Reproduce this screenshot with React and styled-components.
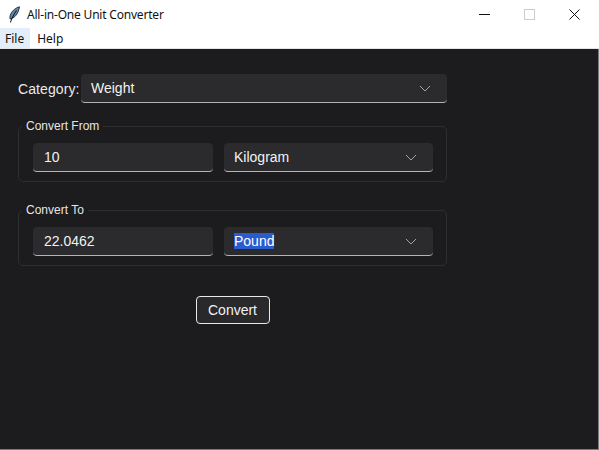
import React from 'react';
import styled, { createGlobalStyle } from 'styled-components';

const Global = createGlobalStyle`
  html, body { margin: 0; padding: 0; background: #1c1b1d; }
  body { font-family: "Liberation Sans", Arial, sans-serif; overflow: hidden; }
`;

const Window = styled.div`
  width: 599px;
  height: 450px;
  display: flex;
  flex-direction: column;
  overflow: hidden;
  background: #1c1b1d;
`;

const TitleBar = styled.div`
  height: 28px;
  flex: none;
  display: flex;
  align-items: center;
  background: #fff;
  padding: 0 2px 0 7px;
`;

const TitleText = styled.span`
  font-family: "Noto Sans", "Open Sans", sans-serif;
  font-size: 12px;
  letter-spacing: -0.2px;
  color: #111;
  margin-left: 6px;
  flex: 1;
`;

const WinButton = styled.div`
  width: 45px;
  height: 28px;
  display: flex;
  align-items: center;
  justify-content: center;
`;

const MenuBar = styled.div`
  height: 20px;
  flex: none;
  display: flex;
  background: #fff;
  border-bottom: 1px solid #e4e4e4;
`;

const MenuItem = styled.div`
  height: 20px;
  display: flex;
  align-items: center;
  padding: 0 ${p => p.$right}px 0 ${p => p.$left}px;
  font-family: "Noto Sans", "Open Sans", sans-serif;
  font-size: 12px;
  color: #111;
  background: ${p => (p.$active ? '#e2eefa' : 'transparent')};
`;

const Body = styled.div`
  flex: 1;
  box-sizing: border-box;
  display: flex;
  flex-direction: column;
  padding: 25px 151px 0 18px;
  border-right: 1px solid #7c7c7c;
  border-bottom: 1px solid #7c7c7c;
`;

const CategoryRow = styled.div`
  display: flex;
  align-items: center;
  justify-content: space-between;
`;

const Label = styled.span`
  font-size: 14px;
  letter-spacing: 0.1px;
  color: #e9e9e9;
`;

const Field = styled.div`
  box-sizing: border-box;
  width: ${p => p.$w}px;
  height: 29px;
  display: flex;
  align-items: center;
  justify-content: space-between;
  padding: 0 16px 0 ${p => p.$left}px;
  background: #2b2a2c;
  border-radius: 4px;
  border-bottom: 1px solid #b5b5b5;
  font-size: 14px;
  color: #f2f2f2;
`;

const Frame = styled.fieldset`
  box-sizing: border-box;
  margin: ${p => p.$top}px 0 0;
  width: 429px;
  height: 63px;
  padding: 0 13px 0 14px;
  border: 1px solid #2f2e30;
  border-radius: 5px;
  min-inline-size: 0;
`;

const Legend = styled.legend`
  margin-left: -11px;
  padding: 0 4px;
  font-size: 12px;
  line-height: 14px;
  color: #e6e6e6;
`;

const FrameRow = styled.div`
  display: flex;
  justify-content: space-between;
  margin-top: 10px;
`;

const Selected = styled.span`
  background: #2a5bd0;
  color: #fff;
`;

const ButtonRow = styled.div`
  display: flex;
  justify-content: center;
  margin-top: 30px;
`;

const ConvertButton = styled.button`
  box-sizing: border-box;
  width: 74px;
  height: 28px;
  padding: 0;
  background: #29282a;
  border: 1px solid #e8e8e8;
  border-radius: 4px;
  color: #f2f2f2;
  font-family: inherit;
  font-size: 14px;
`;

const Chevron = () => (
  <svg width="12" height="7" viewBox="0 0 12 7" fill="none" stroke="#a3a3a3" strokeWidth="1">
    <path d="M1 1l5 5 5-5" />
  </svg>
);

const Feather = () => (
  <svg width="14" height="17" viewBox="0 0 14 17">
    <path d="M12.500 .8C8.500 1.800 4.200 5.500 3.200 9.500c-.4 1.500-.4 2.700 0 3.600 3.800-1 6.800-4 8-7.600.6-1.700 1.100-3.300 1.300-4.700z" fill="#5f86ad" stroke="#1b2a3a" strokeWidth="0.9" />
    <path d="M9.500 4.500C7 8 4.800 12 3.400 16.500" fill="none" stroke="#111" strokeWidth="1" />
  </svg>
);

export default function App() {
  return (
    <Window>
      <Global />
      <TitleBar>
        <Feather />
        <TitleText>All-in-One Unit Converter</TitleText>
        <WinButton>
          <svg width="11" height="11" viewBox="0 0 11 11"><path d="M0 5.500h11" stroke="#111" strokeWidth="1" /></svg>
        </WinButton>
        <WinButton>
          <svg width="11" height="11" viewBox="0 0 11 11"><rect x="0.500" y="0.500" width="10" height="10" fill="none" stroke="#ccc" /></svg>
        </WinButton>
        <WinButton>
          <svg width="11" height="11" viewBox="0 0 11 11"><path d="M0.500 0.500l10 10M10.500 0.500l-10 10" stroke="#111" strokeWidth="1" /></svg>
        </WinButton>
      </TitleBar>
      <MenuBar>
        <MenuItem $active $left={5} $right={6}>File</MenuItem>
        <MenuItem $left={7} $right={7}>Help</MenuItem>
      </MenuBar>
      <Body>
        <CategoryRow>
          <Label>Category:</Label>
          <Field $w={366} $left={10}>
            <span>Weight</span>
            <Chevron />
          </Field>
        </CategoryRow>
        <Frame $top={16}>
          <Legend>Convert From</Legend>
          <FrameRow>
            <Field $w={180} $left={11}><span>10</span></Field>
            <Field $w={209} $left={10}><span>Kilogram</span><Chevron /></Field>
          </FrameRow>
        </Frame>
        <Frame $top={21}>
          <Legend>Convert To</Legend>
          <FrameRow>
            <Field $w={180} $left={11}><span>22.0462</span></Field>
            <Field $w={209} $left={10}><Selected>Pound</Selected><Chevron /></Field>
          </FrameRow>
        </Frame>
        <ButtonRow>
          <ConvertButton>Convert</ConvertButton>
        </ButtonRow>
      </Body>
    </Window>
  );
}
